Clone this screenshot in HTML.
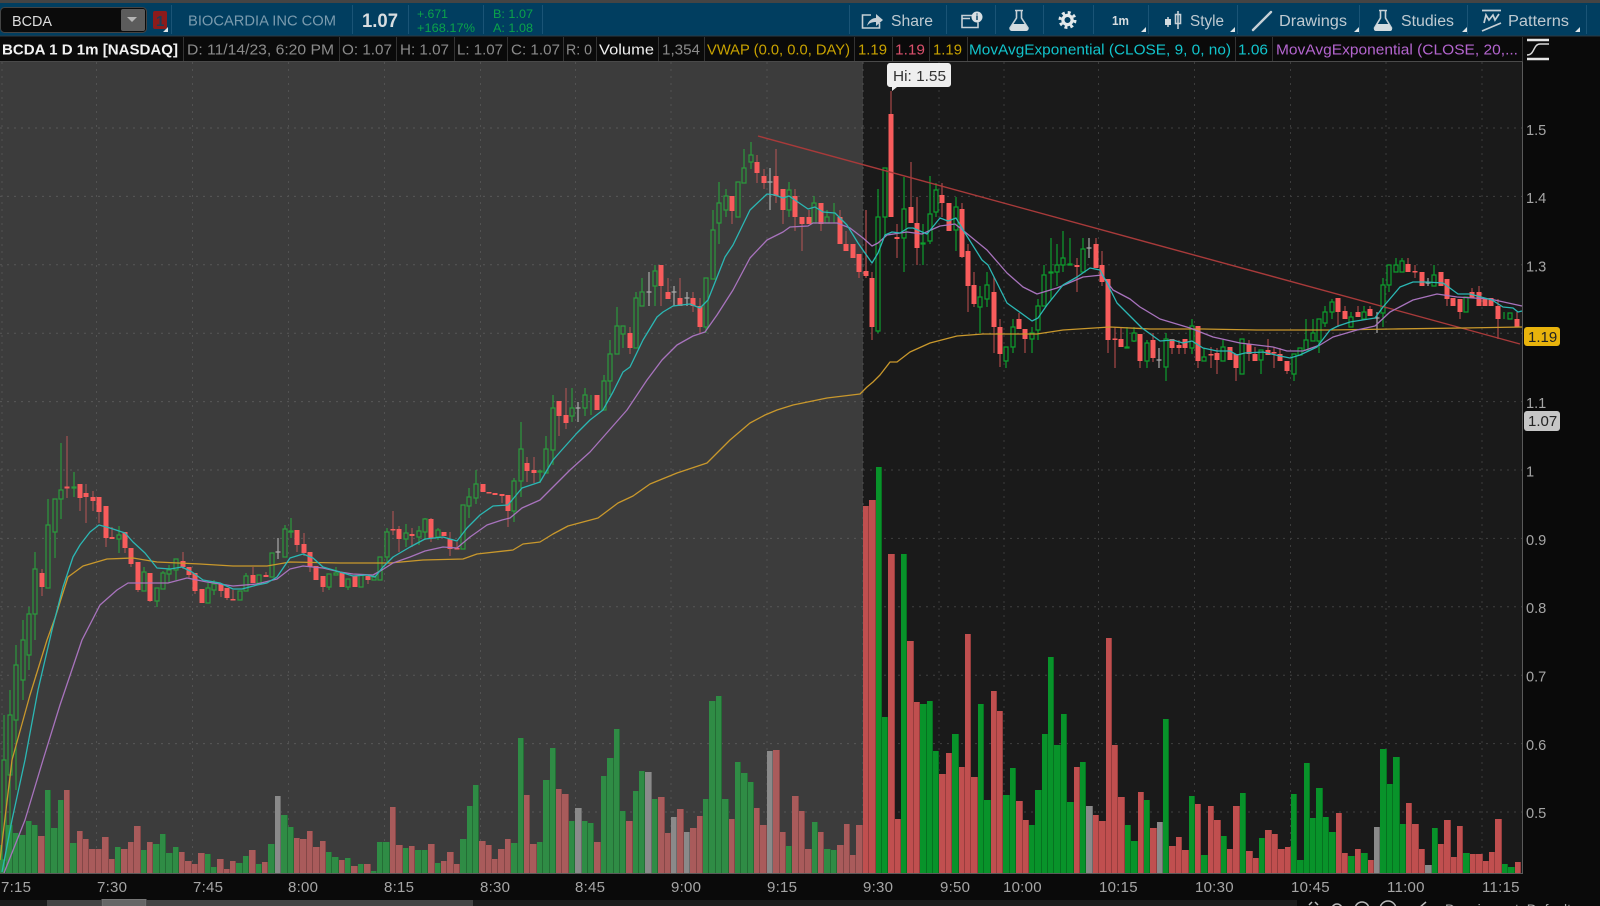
<!DOCTYPE html>
<html><head><meta charset="utf-8"><title>BCDA chart</title>
<style>
html,body{margin:0;padding:0;background:#0a0a0a;width:1600px;height:906px;overflow:hidden}
.l{position:absolute;left:0;top:0}
#v{display:flex;height:873px;width:1523px;overflow:hidden}
#v i{display:block;flex:0 0 6.391px;box-shadow:inset -1px 0 rgba(0,0,0,.22)}
.g{background:#2f8c45}.r{background:#a95b5b}.a{background:#8a8a8a}.G{background:#08932a}.R{background:#c04f4f}
svg text{font-family:"Liberation Sans",sans-serif}
</style></head><body>
<svg class="l" width="1600" height="906" viewBox="0 0 1600 906">
<rect width="1600" height="906" fill="#0a0a0a"/>
<rect x="0" y="62" width="863" height="811" fill="#3c3c3c"/>
<rect x="863" y="62" width="659" height="811" fill="#1a1a1a"/>
<path d="M0 128H863M0 196.4H863M0 264.8H863M0 333.2H863M0 401.6H863M0 470H863M0 538.4H863M0 606.8H863M0 675.2H863M0 743.6H863M0 812H863" stroke="#575757" stroke-dasharray="2 5" fill="none"/>
<path d="M2 62V873M96.5 62V873M192.5 62V873M288.5 62V873M384.5 62V873M480.5 62V873M575.5 62V873M671 62V873M767 62V873M863 62V873" stroke="#525252" stroke-dasharray="2 5" fill="none"/>
<path d="M863 128H1522M863 196.4H1522M863 264.8H1522M863 333.2H1522M863 401.6H1522M863 470H1522M863 538.4H1522M863 606.8H1522M863 675.2H1522M863 743.6H1522M863 812H1522" stroke="#404040" stroke-dasharray="2 5" fill="none"/>
<path d="M939 62V873M1004 62V873M1098.5 62V873M1194.5 62V873M1290.5 62V873M1386 62V873M1482 62V873" stroke="#3c3c3c" stroke-dasharray="2 5" fill="none"/>
</svg>
<div id="v" class="l"><i class=g style=margin-top:845px></i><i class=g style=margin-top:825px></i><i class=g style=margin-top:833px></i><i class=g style=margin-top:835px></i><i class=g style=margin-top:821px></i><i class=g style=margin-top:825px></i><i class=r style=margin-top:836px></i><i class=g style=margin-top:790px></i><i class=g style=margin-top:828px></i><i class=g style=margin-top:800px></i><i class=r style=margin-top:790px></i><i class=g style=margin-top:843px></i><i class=r style=margin-top:831px></i><i class=r style=margin-top:839px></i><i class=r style=margin-top:849px></i><i class=r style=margin-top:849px></i><i class=r style=margin-top:837px></i><i class=r style=margin-top:859px></i><i class=g style=margin-top:847px></i><i class=r style=margin-top:849px></i><i class=r style=margin-top:842px></i><i class=r style=margin-top:826px></i><i class=g style=margin-top:850px></i><i class=r style=margin-top:842px></i><i class=g style=margin-top:844px></i><i class=g style=margin-top:834px></i><i class=g style=margin-top:853px></i><i class=g style=margin-top:847px></i><i class=r style=margin-top:852px></i><i class=r style=margin-top:861px></i><i class=r style=margin-top:864px></i><i class=r style=margin-top:853px></i><i class=g style=margin-top:854px></i><i class=g style=margin-top:867px></i><i class=r style=margin-top:859px></i><i class=r style=margin-top:869px></i><i class=r style=margin-top:861px></i><i class=g style=margin-top:863px></i><i class=g style=margin-top:856px></i><i class=r style=margin-top:850px></i><i class=g style=margin-top:864px></i><i class=r style=margin-top:862px></i><i class=g style=margin-top:844px></i><i class=a style=margin-top:796px></i><i class=g style=margin-top:815px></i><i class=g style=margin-top:827px></i><i class=r style=margin-top:838px></i><i class=r style=margin-top:839px></i><i class=r style=margin-top:831px></i><i class=r style=margin-top:847px></i><i class=r style=margin-top:841px></i><i class=g style=margin-top:852px></i><i class=g style=margin-top:857px></i><i class=r style=margin-top:860px></i><i class=g style=margin-top:858px></i><i class=r style=margin-top:866px></i><i class=g style=margin-top:864px></i><i class=r style=margin-top:864px></i><i class=g style=margin-top:871px></i><i class=g style=margin-top:842px></i><i class=g style=margin-top:842px></i><i class=r style=margin-top:807px></i><i class=r style=margin-top:845px></i><i class=g style=margin-top:848px></i><i class=r style=margin-top:846px></i><i class=g style=margin-top:850px></i><i class=g style=margin-top:850px></i><i class=r style=margin-top:844px></i><i class=g style=margin-top:863px></i><i class=r style=margin-top:861px></i><i class=r style=margin-top:852px></i><i class=r style=margin-top:864px></i><i class=g style=margin-top:839px></i><i class=g style=margin-top:806px></i><i class=g style=margin-top:785px></i><i class=r style=margin-top:841px></i><i class=r style=margin-top:845px></i><i class=r style=margin-top:859px></i><i class=r style=margin-top:849px></i><i class=r style=margin-top:839px></i><i class=g style=margin-top:843px></i><i class=g style=margin-top:738px></i><i class=r style=margin-top:795px></i><i class=r style=margin-top:844px></i><i class=g style=margin-top:842px></i><i class=g style=margin-top:780px></i><i class=g style=margin-top:748px></i><i class=r style=margin-top:789px></i><i class=r style=margin-top:794px></i><i class=g style=margin-top:821px></i><i class=a style=margin-top:808px></i><i class=g style=margin-top:821px></i><i class=g style=margin-top:823px></i><i class=r style=margin-top:842px></i><i class=g style=margin-top:776px></i><i class=g style=margin-top:758px></i><i class=g style=margin-top:729px></i><i class=g style=margin-top:811px></i><i class=r style=margin-top:821px></i><i class=g style=margin-top:791px></i><i class=g style=margin-top:771px></i><i class=a style=margin-top:772px></i><i class=g style=margin-top:799px></i><i class=r style=margin-top:797px></i><i class=r style=margin-top:833px></i><i class=a style=margin-top:817px></i><i class=r style=margin-top:809px></i><i class=a style=margin-top:832px></i><i class=r style=margin-top:828px></i><i class=r style=margin-top:816px></i><i class=g style=margin-top:799px></i><i class=g style=margin-top:701px></i><i class=g style=margin-top:696px></i><i class=g style=margin-top:799px></i><i class=r style=margin-top:819px></i><i class=g style=margin-top:762px></i><i class=g style=margin-top:773px></i><i class=g style=margin-top:782px></i><i class=r style=margin-top:808px></i><i class=r style=margin-top:825px></i><i class=a style=margin-top:751px></i><i class=r style=margin-top:750px></i><i class=r style=margin-top:832px></i><i class=g style=margin-top:846px></i><i class=r style=margin-top:796px></i><i class=r style=margin-top:811px></i><i class=r style=margin-top:849px></i><i class=g style=margin-top:822px></i><i class=r style=margin-top:832px></i><i class=g style=margin-top:849px></i><i class=g style=margin-top:850px></i><i class=r style=margin-top:845px></i><i class=r style=margin-top:824px></i><i class=r style=margin-top:855px></i><i class=r style=margin-top:825px></i><i class=R style=margin-top:506px></i><i class=R style=margin-top:500px></i><i class=G style=margin-top:467px></i><i class=G style=margin-top:717px></i><i class=R style=margin-top:554px></i><i class=R style=margin-top:819px></i><i class=G style=margin-top:554px></i><i class=R style=margin-top:641px></i><i class=R style=margin-top:702px></i><i class=G style=margin-top:704px></i><i class=G style=margin-top:701px></i><i class=G style=margin-top:751px></i><i class=R style=margin-top:774px></i><i class=R style=margin-top:753px></i><i class=G style=margin-top:734px></i><i class=R style=margin-top:767px></i><i class=R style=margin-top:634px></i><i class=R style=margin-top:777px></i><i class=G style=margin-top:704px></i><i class=G style=margin-top:800px></i><i class=R style=margin-top:691px></i><i class=R style=margin-top:711px></i><i class=G style=margin-top:795px></i><i class=G style=margin-top:768px></i><i class=R style=margin-top:801px></i><i class=R style=margin-top:820px></i><i class=G style=margin-top:825px></i><i class=G style=margin-top:790px></i><i class=G style=margin-top:734px></i><i class=G style=margin-top:657px></i><i class=G style=margin-top:745px></i><i class=G style=margin-top:714px></i><i class=G style=margin-top:802px></i><i class=R style=margin-top:767px></i><i class=G style=margin-top:762px></i><i class=a style=margin-top:806px></i><i class=R style=margin-top:815px></i><i class=R style=margin-top:821px></i><i class=R style=margin-top:638px></i><i class=R style=margin-top:745px></i><i class=R style=margin-top:797px></i><i class=G style=margin-top:825px></i><i class=G style=margin-top:841px></i><i class=R style=margin-top:792px></i><i class=G style=margin-top:800px></i><i class=R style=margin-top:828px></i><i class=a style=margin-top:822px></i><i class=G style=margin-top:719px></i><i class=R style=margin-top:846px></i><i class=R style=margin-top:837px></i><i class=R style=margin-top:850px></i><i class=G style=margin-top:796px></i><i class=R style=margin-top:804px></i><i class=G style=margin-top:855px></i><i class=R style=margin-top:806px></i><i class=R style=margin-top:820px></i><i class=G style=margin-top:836px></i><i class=R style=margin-top:849px></i><i class=R style=margin-top:806px></i><i class=G style=margin-top:793px></i><i class=R style=margin-top:851px></i><i class=R style=margin-top:858px></i><i class=G style=margin-top:838px></i><i class=R style=margin-top:830px></i><i class=R style=margin-top:834px></i><i class=R style=margin-top:849px></i><i class=R style=margin-top:847px></i><i class=G style=margin-top:794px></i><i class=G style=margin-top:860px></i><i class=G style=margin-top:763px></i><i class=G style=margin-top:818px></i><i class=G style=margin-top:788px></i><i class=G style=margin-top:817px></i><i class=G style=margin-top:832px></i><i class=R style=margin-top:813px></i><i class=R style=margin-top:853px></i><i class=G style=margin-top:856px></i><i class=R style=margin-top:849px></i><i class=G style=margin-top:853px></i><i class=R style=margin-top:860px></i><i class=a style=margin-top:827px></i><i class=G style=margin-top:749px></i><i class=G style=margin-top:784px></i><i class=G style=margin-top:757px></i><i class=G style=margin-top:824px></i><i class=R style=margin-top:803px></i><i class=R style=margin-top:824px></i><i class=R style=margin-top:849px></i><i class=a style=margin-top:865px></i><i class=G style=margin-top:828px></i><i class=R style=margin-top:844px></i><i class=R style=margin-top:820px></i><i class=R style=margin-top:857px></i><i class=R style=margin-top:826px></i><i class=G style=margin-top:853px></i><i class=R style=margin-top:854px></i><i class=R style=margin-top:854px></i><i class=R style=margin-top:861px></i><i class=R style=margin-top:852px></i><i class=R style=margin-top:819px></i><i class=G style=margin-top:864px></i><i class=G style=margin-top:867px></i><i class=R style=margin-top:862px></i></div>
<svg class="l" width="1600" height="906" viewBox="0 0 1600 906">
<!-- premarket wicks -->
<path fill="none" stroke="#2b9a3d" stroke-width="1.2" d="M4 715V873M10 690V850M16 645V790M23 620V700M29 607V670M35 552V640M48 499V588M55 499V558M61 443V519M74 472V497M119 526V553M144 567V591M157 588V607M163 571V589M169 565V583M176 559V580M208 583V603M214 580V595M240 591V600M246 573V591M259 575V583M272 553V577M285 525V557M291 518V538M329 574V590M336 567V575M348 579V590M361 575V587M374 575V580M380 557V580M387 528V562M406 524V547M419 526V545M425 518V540M438 528V540M463 505V549M469 488V518M476 470V504M514 478V522M521 422V497M540 471V483M546 436V473M553 395V465M572 388V422M585 388V416M591 395V415M604 375V410M610 340V395M617 307V354M623 326V348M636 292V348M642 278V306M655 265V306M706 278V333M713 210V279M719 182V244M726 189V217M738 182V217M744 149V183M751 142V169M789 182V217M814 196V223M827 210V223M834 203V223"/>
<path fill="none" stroke="#a35252" stroke-width="1.2" d="M42 569V596M67 436V498M80 484V511M86 484V523M93 491V511M99 497V523M106 506V547M112 527V539M125 532V553M131 548V567M138 562V592M150 573V602M183 552V569M189 567V578M195 573V594M221 583V597M227 588V600M233 590V600M253 567V583M266 572V577M297 530V552M304 533V556M310 552V572M323 576V592M368 576V584M393 511V535M399 526V552M412 528V547M431 518V542M450 532V556M457 542V549M502 494V503M508 495V527M527 457V482M534 457V483M559 401V436M566 388V429M630 327V354M661 265V306M668 278V299M680 278V306M693 292V312M700 298V334M732 196V224M757 155V183M764 169V189M776 149V203M783 189V224M795 189V231M802 217V251M809 210V224M821 203V231M840 210V244M846 231V251M853 244V258M859 254V278M866 210V278"/>
<path fill="none" stroke="#aaa" stroke-width="1.2" d="M278 538V559M275.5 552h5M578 402V422M575.5 408h5M649 272V306M646.5 292h5M674 286V306M671.5 292h5M687 292V306M684.5 298h5M770 168V210M767.5 182h5"/>
<!-- premarket bodies -->
<path fill="#3c3c3c" stroke="#2b9a3d" stroke-width="1.2" d="M2 760h4V860h-4zM8 715h4V775h-4zM14 665h4V720h-4zM21 640h4V680h-4zM27 614h4V655h-4zM33 569h4V614h-4zM46 525h4V588h-4zM53 499h4V532h-4zM59 490h4V499h-4zM72 487h4v1h-4zM117 535h4V539h-4zM142 572h4V591h-4zM155 588h4V601h-4zM161 573h4V589h-4zM167 570h4V574h-4zM174 559h4V570h-4zM206 588h4V603h-4zM212 584h4V590h-4zM238 591h4V600h-4zM244 576h4V591h-4zM257 575h4V583h-4zM270 553h4V577h-4zM283 529h4V557h-4zM289 531h4V532h-4zM327 574h4V587h-4zM334 573h4V575h-4zM346 579h4V587h-4zM359 575h4V587h-4zM372 577h4V580h-4zM378 557h4V580h-4zM385 532h4V557h-4zM404 533h4V539h-4zM417 531h4V537h-4zM423 519h4V532h-4zM436 530h4V537h-4zM461 505h4V549h-4zM467 497h4V506h-4zM474 484h4V498h-4zM512 481h4V511h-4zM519 449h4V481h-4zM538 471h4v1h-4zM544 449h4V473h-4zM551 408h4V450h-4zM570 408h4V416h-4zM583 395h4V408h-4zM602 381h4V410h-4zM608 354h4V381h-4zM615 326h4V354h-4zM621 326h4V334h-4zM634 298h4V348h-4zM640 292h4V306h-4zM653 271h4V286h-4zM704 278h4V327h-4zM711 230h4V279h-4zM717 203h4V223h-4zM724 196h4V210h-4zM736 182h4V217h-4zM742 168h4V183h-4zM749 155h4V162h-4zM787 190h4V210h-4zM812 203h4V223h-4zM825 217h4V223h-4z"/>
<path fill="none" stroke="#f85c5c" stroke-width="5" d="M42 573V587M67 486.5V488.5M80 484V498M86 493V497M93 497V501M99 497V512M106 506V538M112 537V539M125 532V548M131 548V564M138 562V590M150 573V601M183 561V567M189 567V575M195 573V591M202 589V603M221 584V591M227 588V598M233 599V600.5M253 575V583M266 575V577M297 530V545M304 544V553M310 552V567M316 566V580M323 576V587M342 572V587M355 576V587M368 576V580M393 529V530.5M399 529V539M412 534V536M431 519V538M444 532V536M450 539V549M457 548V549.5M483 484V492M489 492V493.5M495 493V495M502 494V496M508 495V511M527 463V471M534 470V473M559 401V416M566 415V423M597 395V410M630 333V348M661 265V286M668 292V299M680 298V306M693 298V306M700 306V327M732 196V211M757 162V173M764 176V183M776 176V196M783 189V210M795 196V217M802 217V224M809 217V224M821 203V224M840 217V244M846 244V251M853 244V258M859 254V272"/>
<!-- market wicks -->
<path fill="none" stroke="#0d9e2e" stroke-width="1.2" d="M878 189V333M885 168V235M904 177V272M923 224V265M930 176V244M936 183V217M956 197V251M980 286V333M987 272V307M1006 347V368M1013 319V353M1032 327V353M1038 299V340M1044 265V306M1051 238V300M1057 244V286M1063 231V272M1070 238V265M1083 238V272M1127 327V347M1134 327V342M1147 340V368M1166 333V381M1192 319V354M1204 348V361M1223 340V361M1242 339V374M1261 350V374M1294 354V381M1300 348V355M1306 319V350M1313 319V341M1319 319V353M1325 306V327M1332 299V319M1351 312V327M1364 306V319M1383 278V327M1389 265V292M1396 258V272M1402 258V272M1434 265V286M1466 297V312M1504 312V319M1510 313V319"/>
<path fill="none" stroke="#a84848" stroke-width="1.2" d="M859 254V278M866 210V278M872 272V340M891 91V217M897 224V258M911 162V223M917 197V265M942 183V217M962 203V258M968 244V312M974 272V307M994 277V353M1000 319V367M1019 313V329M1025 329V353M1077 258V292M1096 238V268M1102 251V286M1108 279V353M1115 327V368M1121 327V347M1140 361V368M1153 333V362M1172 348V354M1179 340V354M1185 348V354M1198 361V368M1211 347V368M1217 348V374M1236 368V381M1249 340V361M1255 347V354M1268 339V355M1274 347V368M1280 348V361M1287 371V374M1338 312V327M1345 306V311M1358 306V312M1370 306V316M1408 258V264M1415 265V278M1447 299V306M1460 312V319M1472 288V292M1479 286V292M1498 299V339M1517 312V319"/>
<path fill="none" stroke="#aaa" stroke-width="1.2" d="M1089 238V258M1086.5 248h5M1159 348V368M1156.5 360h5M1377 312V333M1374.5 318h5M1428 278V286M1425.5 283h5"/>
<path fill="#1a1a1a" stroke="#0d9e2e" stroke-width="1.2" d="M876 217h4V331h-4zM883 168h4V217h-4zM902 209h4V238h-4zM921 243h4v1h-4zM928 214h4V241h-4zM934 190h4V212h-4zM954 207h4V230h-4zM978 297h4V307h-4zM985 285h4V299h-4zM1004 347h4V361h-4zM1011 327h4V347h-4zM1030 333h4V339h-4zM1036 306h4V330h-4zM1042 275h4V306h-4zM1049 272h4v1h-4zM1055 265h4V272h-4zM1061 258h4V265h-4zM1068 264h4v1h-4zM1081 249h4V272h-4zM1125 347h4v1h-4zM1132 333h4V341h-4zM1145 343h4V361h-4zM1164 339h4V367h-4zM1190 326h4V348h-4zM1202 357h4V361h-4zM1221 347h4V361h-4zM1240 339h4V374h-4zM1259 350h4V360h-4zM1292 354h4V374h-4zM1298 348h4V355h-4zM1304 340h4V350h-4zM1311 333h4V341h-4zM1317 319h4V341h-4zM1323 312h4V323h-4zM1330 302h4V312h-4zM1349 317h4V327h-4zM1362 312h4V319h-4zM1381 285h4V313h-4zM1387 265h4V285h-4zM1394 265h4V272h-4zM1400 261h4V272h-4zM1432 275h4V286h-4zM1464 297h4V312h-4zM1508 313h4V319h-4z"/>
<path fill="none" stroke="#f85c5c" stroke-width="5" d="M859 254V272M866 271V276M872 278V327M891 114V217M897 237V239M911 207V223M917 223V248M942 195V203M949 203V231M962 209V257M968 251V286M974 285V304M994 292V327M1000 327V354M1019 319V329M1025 329V339M1077 265V267M1096 244V268M1102 265V282M1108 279V340M1115 338.5V340M1121 339V347M1140 334V361M1153 340V358M1172 339V348M1179 345V348M1185 339V348M1198 326V361M1211 354V355.5M1217 353V360M1230 347V360M1236 354V368M1249 344V354M1255 354V361M1268 350V355M1274 352V353.5M1280 354V361M1287 361V371M1338 298V312M1345 311V319M1358 312V317M1370 309V316M1408 264V272M1415 271V272.5M1422 272V286M1441 272V286M1447 279V299M1453 298V306M1460 299V312M1472 292V298M1479 292V306M1485 299V306M1491 298V306M1498 306V319M1517 319V327"/>
<!-- indicators -->
<path fill="none" stroke="#a83a3a" stroke-width="1.4" d="M758 136L1520 344"/>
<path fill="none" stroke="#c9982c" stroke-width="1.3" stroke-linejoin="round" d="M0 860L12 760 30 695 47 640 55 618 68 577 83 566 107 559 133 558 157 562 200 564 233 566 267 566 290 562 340 563 390 563 423 560 463 559 477 554 513 550 523 544 540 542 553 534 568 526 598 518 618 503 633 496 650 484 677 473 707 463 730 440 750 423 765 415 777 410 793 405 827 398 860 394 867 387 873 382 880 375 890 362 897 362 910 352 930 343 957 336 983 334 1037 334 1063 330 1110 327 1150 329 1203 329 1257 330 1330 330 1393 329 1463 328 1522 327"/>
<path fill="none" stroke="#a873bd" stroke-width="1.3" stroke-linejoin="round" d="M4 873L25 820 43 760 60 705 82 640 100 605 117 590 128 583 143 583 168 583 187 578 207 582 233 586 257 584 277 579 290 569 303 566 313 567 323 568 340 572 353 574 373 575 382 570 393 563 410 557 425 551 443 547 457 548 470 537 487 525 502 520 510 518 522 508 540 500 550 490 570 470 590 452 627 410 647 380 662 360 677 345 693 336 705 332 717 315 733 290 750 258 767 240 783 232 790 227 808 226 813 223 837 223 850 228 863 238 872 246 878 243 887 235 907 232 922 234 940 226 955 224 965 232 987 250 1007 273 1023 287 1037 294 1057 288 1083 277 1102 275 1113 290 1130 299 1140 307 1160 319 1190 328 1213 337 1240 343 1273 347 1287 351 1303 351 1320 345 1333 337 1357 330 1375 326 1390 312 1413 300 1437 294 1457 297 1490 299 1522 306"/>
<path fill="none" stroke="#2bb7b4" stroke-width="1.3" stroke-linejoin="round" d="M2 872L12 820 25 760 38 690 52 630 63 587 73 557 80 545 90 532 99 525 110 528 125 533 133 542 145 553 157 568 170 569 182 567 192 572 203 580 220 583 233 589 242 589 257 585 267 583 277 577 290 558 303 554 313 558 323 567 340 572 353 576 367 575 375 577 383 567 393 557 410 547 425 539 443 537 457 541 467 528 480 515 493 506 508 505 522 488 540 482 553 460 560 452 577 433 590 420 603 410 613 392 623 372 630 367 643 340 657 317 663 312 673 306 690 304 700 308 708 300 725 257 733 245 750 210 767 194 775 195 783 198 789 196 808 209 815 207 823 212 835 213 847 225 858 243 872 263 878 253 885 235 892 232 900 233 908 228 913 228 927 234 940 218 948 221 956 218 965 233 982 260 988 265 1007 303 1032 321 1038 318 1047 305 1063 285 1077 277 1090 268 1100 270 1108 285 1117 303 1130 316 1142 328 1160 341 1173 340 1183 343 1192 341 1203 348 1217 351 1230 351 1237 355 1245 353 1263 352 1280 356 1290 358 1300 355 1317 347 1330 330 1338 326 1350 322 1375 318 1383 307 1400 287 1413 282 1427 282 1443 283 1458 294 1470 294 1492 300 1503 307 1513 308 1518 312 1522 311"/>

<!-- axis -->
<path d="M1522.5 62V873M0 873.5H1523" stroke="#5a5a5a" fill="none"/>
<g fill="#a5a5a5" font-size="15" letter-spacing=".25">
<text x="1" y="892">7:15</text><text x="97" y="892">7:30</text><text x="193" y="892">7:45</text><text x="288" y="892">8:00</text><text x="384" y="892">8:15</text><text x="480" y="892">8:30</text><text x="575" y="892">8:45</text><text x="671" y="892">9:00</text><text x="767" y="892">9:15</text><text x="863" y="892">9:30</text><text x="940" y="892">9:50</text><text x="1003" y="892">10:00</text><text x="1099" y="892">10:15</text><text x="1195" y="892">10:30</text><text x="1291" y="892">10:45</text><text x="1387" y="892">11:00</text><text x="1482" y="892">11:15</text>
</g>
<g fill="#a5a5a5" font-size="14.6">
<text x="1526" y="135">1.5</text><text x="1526" y="203">1.4</text><text x="1526" y="271.5">1.3</text><text x="1526" y="408">1.1</text><text x="1526" y="476.5">1</text><text x="1526" y="545">0.9</text><text x="1526" y="613">0.8</text><text x="1526" y="681.5">0.7</text><text x="1526" y="750">0.6</text><text x="1526" y="818">0.5</text>
</g>
<rect x="1524" y="327" width="36" height="19" rx="3" fill="#e8b30c"/><text x="1528" y="342" font-size="15" fill="#222">1.19</text>
<rect x="1524" y="411" width="36" height="20" rx="3" fill="#c6c6c6"/><text x="1528" y="426" font-size="15" fill="#222">1.07</text>
<!-- tooltip -->
<path d="M890 63h58a3 3 0 0 1 3 3v18a3 3 0 0 1-3 3h-51l-5 4v-4h-2a3 3 0 0 1-3-3v-18a3 3 0 0 1 3-3z" fill="#efefef"/>
<text x="893" y="81" font-size="15" fill="#333" textLength="53" lengthAdjust="spacingAndGlyphs">Hi: 1.55</text>

<!-- top toolbar -->
<rect width="1600" height="3" fill="#444"/>
<rect y="3" width="1600" height="33" fill="#013e60"/>
<path d="M0 36H1600" stroke="#2c3a44" fill="none"/>
<path d="M171.5 5V34M352.5 5V34M408.5 5V34M483.5 5V34M542.5 5V34M849.5 5V34M946.5 5V34M995.5 5V34M1043.5 5V34M1093.5 5V34M1148.5 5V34M1237.5 5V34M1359.5 5V34M1467.5 5V34M1586.5 5V34" stroke="#1a5476" fill="none"/>
<rect x=".5" y="7.5" width="146" height="25" rx="4" fill="#0b0b0b" stroke="#444"/>
<rect x="121" y="9" width="24" height="22" rx="2" fill="#5c5c5c"/>
<path d="M127 17h10l-5 5z" fill="#b5b5b5"/>
<text x="12" y="26" font-size="15" fill="#ddd" textLength="40" lengthAdjust="spacingAndGlyphs">BCDA</text>
<rect x="153" y="11" width="14" height="18" rx="2" fill="#8c1b1b"/>
<text x="156" y="26" font-size="15" fill="#1c3d58" font-weight="bold">1</text>
<path d="M163 32h5v-5zM1141 32h5v-5zM1230 32h5v-5zM1354 32h5v-5zM1462 32h5v-5zM1575 32h5v-5z" fill="#dfe5e8"/>
<text x="188" y="25.5" font-size="15" fill="#7b9bae" textLength="148" lengthAdjust="spacingAndGlyphs">BIOCARDIA INC COM</text>
<text x="362" y="27" font-size="19.5" font-weight="bold" fill="#d8dde0" textLength="36" lengthAdjust="spacingAndGlyphs">1.07</text>
<g fill="#0ba34a" font-size="12">
<text x="417" y="18" textLength="31" lengthAdjust="spacingAndGlyphs">+.671</text>
<text x="417" y="32" textLength="58" lengthAdjust="spacingAndGlyphs">+168.17%</text>
<text x="493" y="18" textLength="40" lengthAdjust="spacingAndGlyphs">B: 1.07</text>
<text x="493" y="32" textLength="40" lengthAdjust="spacingAndGlyphs">A: 1.08</text>
</g>
<g fill="#bfcad1" font-size="15.5">
<text x="891" y="26" textLength="42" lengthAdjust="spacingAndGlyphs">Share</text>
<text x="1190" y="26" textLength="34" lengthAdjust="spacingAndGlyphs">Style</text>
<text x="1279" y="26" textLength="68" lengthAdjust="spacingAndGlyphs">Drawings</text>
<text x="1401" y="26" textLength="53" lengthAdjust="spacingAndGlyphs">Studies</text>
<text x="1508" y="26" textLength="61" lengthAdjust="spacingAndGlyphs">Patterns</text>
</g>
<text x="1112" y="25" font-size="13" font-weight="bold" fill="#d8dde0" textLength="17" lengthAdjust="spacingAndGlyphs">1m</text>
<!-- icons -->
<g fill="none" stroke="#c6d0d6" stroke-width="1.6">
<path d="M871 15h-8.5v13h17v-5"/>
<path d="M972 15.5h-10v12h16v-5M962 18.5h8"/>
<path d="M1015 10.5h8M1016.5 11v7l-6.500 10q0 2 2 2h14q2 0 2-2l-6.500-10v-7"/>
<path d="M1168 17v10M1178 11v18"/>
<path d="M1175.5 14.500h5v9h-5z"/>
<path d="M1253 30L1271 12" stroke-width="2.4" stroke-linecap="round"/>
<path d="M1379 10.5h8M1380.500 11v7l-6 10q0 2 2 2h13q2 0 2-2l-6-10v-7"/>
<path d="M1482 10.500h19M1484 23l2-8 3 5 4-5 2 5 4-6M1482 31l19-8" stroke-width="1.7"/>
</g>
<path d="M867 26c1-5 5-8 9-8v-4l7 6-7 6v-4c-4 0-7 1-9 4z" fill="#c6d0d6"/>
<circle cx="977" cy="17" r="5.500" fill="#d8e0e4"/><path d="M977 15.500v4.500M977 13.500v1" stroke="#013e60" stroke-width="1.4"/>
<path d="M1013 24h12l3 5q0 2-2 2h-14q-2 0-2-2z" fill="#d4dce0"/>
<path d="M1377 24h12l3 5q0 2-2 2h-14q-2 0-2-2z" fill="#d4dce0"/>
<rect x="1165" y="19" width="6" height="6" fill="#d4dce0"/>
<circle cx="1067.500" cy="20" r="7.500" fill="none" stroke="#e3e8ea" stroke-width="3" stroke-dasharray="2.950 2.940"/>
<circle cx="1067.500" cy="20" r="4.600" fill="none" stroke="#e3e8ea" stroke-width="3.200"/>

<!-- legend row -->
<path d="M0 61.500H1523" stroke="#4a4a4a" fill="none"/>
<path d="M183.500 37V61M339.500 37V61M396.500 37V61M454.500 37V61M507.500 37V61M563.500 37V61M596.500 37V61M658.500 37V61M704.500 37V61M854.500 37V61M892.500 37V61M929.500 37V61M967.500 37V61M1235.500 37V61M1272.500 37V61M1522.500 37V61" stroke="#333" fill="none"/>
<g font-size="15">
<text x="2" y="54.500" font-weight="bold" fill="#f2f2f2" textLength="176" lengthAdjust="spacingAndGlyphs">BCDA 1 D 1m [NASDAQ]</text>
<g fill="#8b8b8b">
<text x="187" y="54.500" textLength="147" lengthAdjust="spacingAndGlyphs">D: 11/14/23, 6:20 PM</text>
<text x="342" y="54.500" textLength="50" lengthAdjust="spacingAndGlyphs">O: 1.07</text>
<text x="400" y="54.500" textLength="49" lengthAdjust="spacingAndGlyphs">H: 1.07</text>
<text x="457" y="54.500" textLength="46" lengthAdjust="spacingAndGlyphs">L: 1.07</text>
<text x="511" y="54.500" textLength="49" lengthAdjust="spacingAndGlyphs">C: 1.07</text>
<text x="566" y="54.500" textLength="26" lengthAdjust="spacingAndGlyphs">R: 0</text>
<text x="662" y="54.500" textLength="38" lengthAdjust="spacingAndGlyphs">1,354</text>
</g>
<text x="599" y="54.500" fill="#eee" textLength="55" lengthAdjust="spacingAndGlyphs">Volume</text>
<text x="707" y="54.500" fill="#c9a300" textLength="143" lengthAdjust="spacingAndGlyphs">VWAP (0.0, 0.0, DAY)</text>
<text x="858" y="54.500" fill="#c9a300" textLength="29" lengthAdjust="spacingAndGlyphs">1.19</text>
<text x="895" y="54.500" fill="#d9506c" textLength="30" lengthAdjust="spacingAndGlyphs">1.19</text>
<text x="933" y="54.500" fill="#c9a300" textLength="29" lengthAdjust="spacingAndGlyphs">1.19</text>
<text x="969" y="54.500" fill="#12c4cc" textLength="262" lengthAdjust="spacingAndGlyphs">MovAvgExponential (CLOSE, 9, 0, no)</text>
<text x="1238" y="54.500" fill="#12c4cc" textLength="30" lengthAdjust="spacingAndGlyphs">1.06</text>
<text x="1276" y="54.500" fill="#b465cf" textLength="242" lengthAdjust="spacingAndGlyphs">MovAvgExponential (CLOSE, 20,...</text>
</g>
<path d="M1527 40h22M1527 59h22" stroke="#e6e6e6" stroke-width="2.400" fill="none"/>
<path d="M1527 55c8 0 6-11 13-11 3 0 6 0 9 0" stroke="#d8d8d8" stroke-width="1.500" fill="none"/>

<!-- scrollbar -->
<rect x="0" y="900" width="1297" height="6" fill="#1c1c1c"/>
<rect x="47" y="900" width="54" height="6" fill="#444"/>
<rect x="102" y="899.500" width="44" height="7" fill="#666" stroke="#777"/>
<rect x="147" y="900" width="326" height="6" fill="#444"/>
<g fill="none" stroke="#bbb" stroke-width="1.500">
<path d="M1309 905l3-3M1318 905l-3-3"/>
<circle cx="1337" cy="909" r="5"/>
<circle cx="1362" cy="909" r="7"/>
<circle cx="1388" cy="909" r="8"/>
<path d="M1419 908l7-6"/>
</g>
<text x="1445" y="914" font-size="14" fill="#aaa">Drawing set: Default</text>
</svg>
</body></html>
